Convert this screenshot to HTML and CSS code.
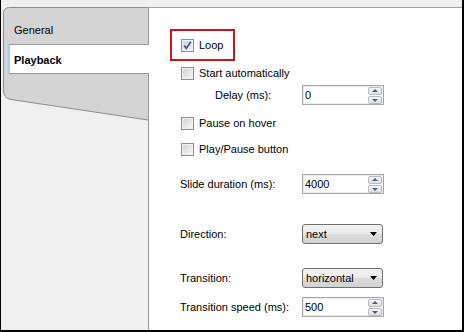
FILE: index.html
```html
<!DOCTYPE html>
<html lang="en">
<head>
    <meta charset="UTF-8">
    <meta name="viewport" content="width=device-width, initial-scale=1.0">
    <title>Slider Settings</title>
    <link rel="stylesheet" href="styles.css">
</head>
<body>
    <div class="frame">
        <div class="sidebar">
            <svg class="tab-shape" width="147" height="120" viewBox="0 0 147 120">
                <path d="M147 0.5 H8.5 Q2.5 0.5 2.5 6.5 V83 Q2.5 91.5 10 92.5 L147 113" fill="#d4d4d4" stroke="#8c8c8c"/>
            </svg>
            <div class="tab">General</div>
            <div class="tab active">Playback</div>
        </div>

        <div class="panel">
            <div class="highlight">
                <div class="check-row">
                    <span class="box">
                        <svg width="11" height="11" viewBox="0 0 11 11"><polyline points="2.2,5.6 4.4,8.4 8.8,1.8" fill="none" stroke="#3c54a0" stroke-width="1.7"/></svg>
                    </span>
                    <span>Loop</span>
                </div>
            </div>

            <div class="check-row row-start">
                <span class="box"></span>
                <span>Start automatically</span>
            </div>

            <div class="field-row row-delay">
                <span class="label indent">Delay (ms):</span>
                <div class="field">
                    <span>0</span>
                    <div class="spin"><span class="up"></span><span class="down"></span></div>
                </div>
            </div>

            <div class="check-row row-pause">
                <span class="box"></span>
                <span>Pause on hover</span>
            </div>

            <div class="check-row row-play">
                <span class="box"></span>
                <span>Play/Pause button</span>
            </div>

            <div class="field-row row-slide">
                <span class="label">Slide duration (ms):</span>
                <div class="field">
                    <span>4000</span>
                    <div class="spin"><span class="up"></span><span class="down"></span></div>
                </div>
            </div>

            <div class="field-row row-direction">
                <span class="label">Direction:</span>
                <div class="select">
                    <span>next</span>
                    <svg width="7" height="4" viewBox="0 0 7 4"><polygon points="0,0 7,0 3.5,4" fill="#000"/></svg>
                </div>
            </div>

            <div class="field-row row-transition">
                <span class="label">Transition:</span>
                <div class="select">
                    <span>horizontal</span>
                    <svg width="7" height="4" viewBox="0 0 7 4"><polygon points="0,0 7,0 3.5,4" fill="#000"/></svg>
                </div>
            </div>

            <div class="field-row row-speed">
                <span class="label">Transition speed (ms):</span>
                <div class="field">
                    <span>500</span>
                    <div class="spin"><span class="up"></span><span class="down"></span></div>
                </div>
            </div>
        </div>
    </div>
</body>
</html>
```

FILE: styles.css
```css
body {
    margin: 0;
    font-family: "Liberation Sans", Arial, sans-serif;
    font-size: 11px;
    line-height: 13px;
    color: #000;
}

.frame {
    width: 464px;
    height: 332px;
    box-sizing: border-box;
    display: flex;
    padding-top: 7px;
    background-color: #f0f0f0;
    border-left: 1px solid #000;
    border-right: 2px solid #000;
    border-bottom: 2px solid #000;
}

/* left tab column */
.sidebar {
    position: relative;
    width: 147px;
    flex-shrink: 0;
}

.tab-shape {
    position: absolute;
    top: 0;
    left: 0;
}

.tab {
    position: relative;
    height: 37px;
    box-sizing: border-box;
    padding: 17px 0 0 13px;
}

.tab.active {
    height: 30px;
    margin: 0 -1px 0 7px;
    padding: 9px 0 0 4px;
    font-weight: bold;
    background-color: #fff;
    border-top: 1px solid #999;
    border-bottom: 1px solid #999;
    border-left: 2px solid #a3cff5;
}

/* settings panel */
.panel {
    flex: 1;
    display: flex;
    flex-direction: column;
    align-items: flex-start;
    padding-left: 31px;
    background-color: #fff;
    border-top: 1px solid #a0a0a0;
    border-left: 1px solid #999;
}

.highlight {
    margin: 21px 0 0 -10px;
    width: 65px;
    height: 32px;
    box-sizing: border-box;
    padding: 8px 0 0 9px;
    border: 2px solid #c8161d;
}

.check-row {
    display: flex;
    align-items: center;
    gap: 5px;
    height: 13px;
}

.highlight .check-row {
    margin-left: 0;
}

.panel > .check-row {
    margin-left: 1px;
}

.box {
    width: 13px;
    height: 13px;
    box-sizing: border-box;
    display: flex;
    align-items: center;
    justify-content: center;
    border: 1px solid #8e8f8f;
    background: linear-gradient(135deg, #cfd2d6, #f7f7f7);
    box-shadow: inset 0 0 0 1px #f2f2f2;
}

.field-row {
    display: grid;
    grid-template-columns: 122px 82px;
    align-items: center;
}

.indent {
    padding-left: 35px;
}

.field {
    height: 20px;
    box-sizing: border-box;
    display: flex;
    align-items: center;
    padding-left: 2px;
    border: 1px solid #a7a7a7;
    box-shadow: inset 0 0 0 1px #ececec;
}

.spin {
    margin-left: auto;
    margin-right: 1px;
    display: flex;
    flex-direction: column;
    gap: 1px;
}

.spin span {
    position: relative;
    width: 14px;
    height: 8px;
    box-sizing: border-box;
    border: 1px solid #b8bcc2;
    border-radius: 2px;
    background: linear-gradient(#f6f6f6, #dfe1e4);
}

.spin span::after {
    content: "";
    position: absolute;
    left: 3px;
    width: 0;
    height: 0;
    border-left: 3px solid transparent;
    border-right: 3px solid transparent;
}

.spin .up::after {
    top: 1px;
    border-bottom: 3px solid #4a5d80;
}

.spin .down::after {
    top: 2px;
    border-top: 3px solid #4a5d80;
}

.select {
    width: 81px;
    height: 20px;
    box-sizing: border-box;
    display: flex;
    align-items: center;
    justify-content: space-between;
    padding: 0 5px 0 3px;
    border: 1px solid #707070;
    border-radius: 3px;
    background: linear-gradient(#f2f2f2 0%, #ebebeb 50%, #dddddd 51%, #d2d2d2 100%);
}

.row-start { margin-top: 6px; }
.row-delay { margin-top: 5px; }
.row-pause { margin-top: 12px; }
.row-play { margin-top: 13px; }
.row-slide { margin-top: 18px; }
.row-direction { margin-top: 30px; }
.row-transition { margin-top: 24px; }
.row-speed { margin-top: 9px; }
```
